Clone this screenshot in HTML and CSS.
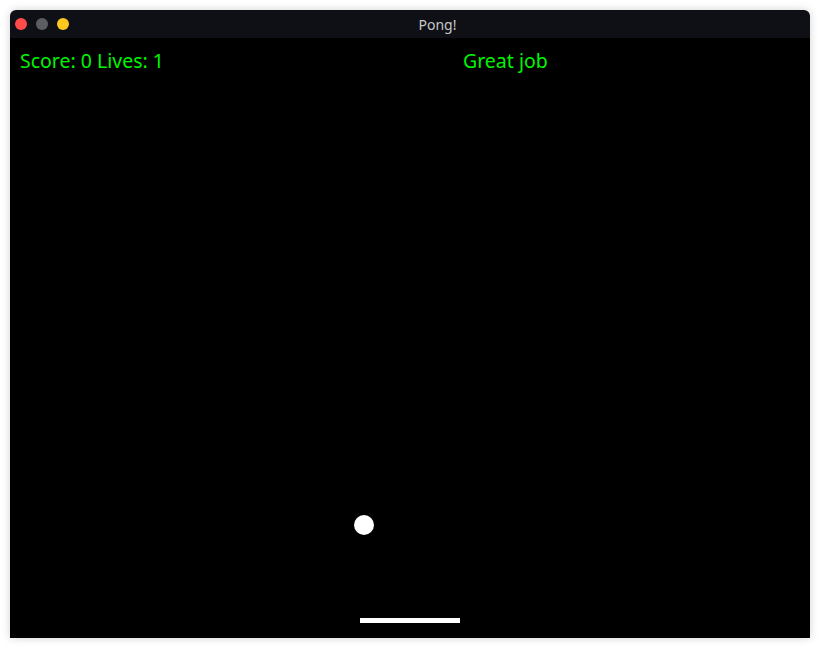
FILE: index.html
```html
<!DOCTYPE html>
<html>
<head>
<meta charset="utf-8">
<link rel="stylesheet" href="styles.css">
</head>
<body>
<div class="window">
  <div class="titlebar">
    <div class="lights">
      <span class="light red"></span>
      <span class="light gray"></span>
      <span class="light yellow"></span>
    </div>
    <div class="title">Pong!</div>
  </div>
  <div class="canvas">
    <div class="hud">
      <span class="score">Score: 0 Lives: 1</span>
      <span class="msg">Great job</span>
    </div>
    <div class="ball"></div>
    <div class="paddle"></div>
  </div>
</div>
</body>
</html>
```
FILE: styles.css
```css
html, body {
  margin: 0;
  padding: 0;
  background: #ffffff;
}
body {
  padding: 10px;
  width: 800px;
}
.window {
  width: 800px;
  border-radius: 6px 6px 0 0;
  overflow: hidden;
  box-shadow: 0 0 8px rgba(0,0,0,0.18);
}
.titlebar {
  height: 28px;
  background: #0f1015;
  display: flex;
  align-items: center;
}
.lights {
  display: flex;
  gap: 9px;
  padding-left: 5px;
}
.light {
  width: 12px;
  height: 12px;
  border-radius: 50%;
  display: block;
}
.red { background: #ff4b4b; }
.gray { background: #5c5c63; }
.yellow { background: #fdc91f; }
.title {
  flex: 1;
  text-align: center;
  margin-left: -4px;
  font-family: "Noto Sans", sans-serif;
  font-size: 14px;
  color: #c8c8c8;
}
.canvas {
  position: relative;
  height: 600px;
  background: #000;
}
.hud {
  display: grid;
  grid-template-columns: 443px auto;
  padding: 10px 0 0 10px;
  font-family: "Noto Sans", sans-serif;
  font-size: 19.5px;
  line-height: 26px;
  color: #00f500;
}
.ball {
  position: absolute;
  left: 344px;
  top: 477px;
  width: 20px;
  height: 20px;
  border-radius: 50%;
  background: #fff;
}
.paddle {
  position: absolute;
  left: 350px;
  top: 580px;
  width: 100px;
  height: 5px;
  background: #fff;
}
```
